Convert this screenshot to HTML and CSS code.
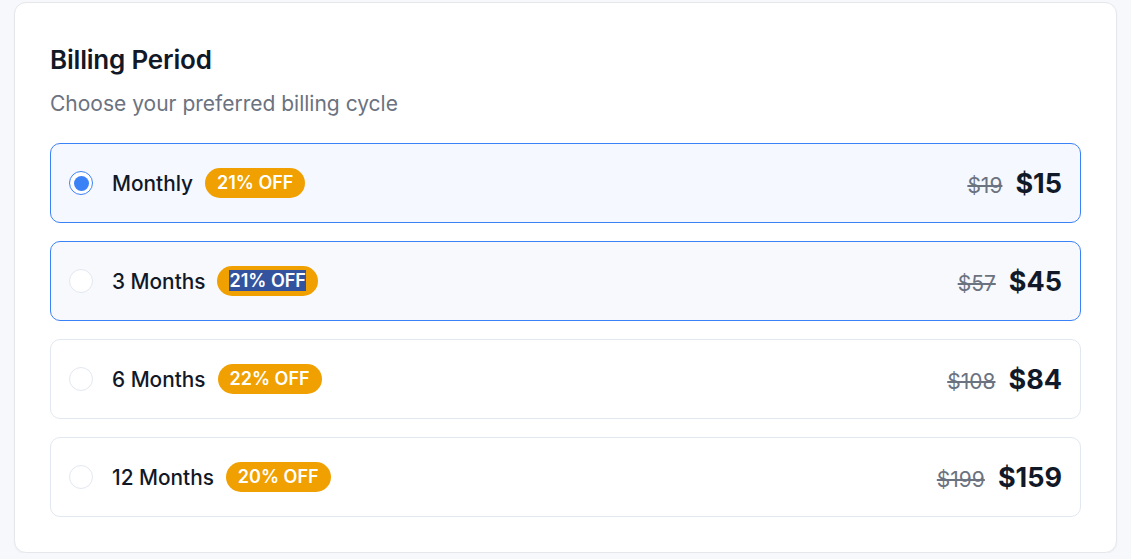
FILE: index.html
```html
<!DOCTYPE html>
<html lang="en">
<head>
<meta charset="utf-8">
<title>Billing Period</title>
<link rel="stylesheet" href="styles.css">
</head>
<body>
<div class="card">
  <h2 class="title">Billing Period</h2>
  <p class="subtitle">Choose your preferred billing cycle</p>
  <div class="options">
    <div class="option selected">
      <div class="left">
        <span class="radio checked"></span>
        <span class="label">Monthly</span>
        <span class="badge">21% OFF</span>
      </div>
      <div class="prices">
        <span class="old">$19</span>
        <span class="new">$15</span>
      </div>
    </div>
    <div class="option hover">
      <div class="left">
        <span class="radio"></span>
        <span class="label">3 Months</span>
        <span class="badge"><span class="sel">21% OFF</span></span>
      </div>
      <div class="prices">
        <span class="old">$57</span>
        <span class="new">$45</span>
      </div>
    </div>
    <div class="option">
      <div class="left">
        <span class="radio"></span>
        <span class="label">6 Months</span>
        <span class="badge">22% OFF</span>
      </div>
      <div class="prices">
        <span class="old">$108</span>
        <span class="new">$84</span>
      </div>
    </div>
    <div class="option">
      <div class="left">
        <span class="radio"></span>
        <span class="label">12 Months</span>
        <span class="badge">20% OFF</span>
      </div>
      <div class="prices">
        <span class="old">$199</span>
        <span class="new">$159</span>
      </div>
    </div>
  </div>
</div>
</body>
</html>
```
FILE: styles.css
```css
* { box-sizing: border-box; }
html, body { margin: 0; }
body {
  background: #f7f8fb;
  font-family: Inter, "Noto Sans", sans-serif;
  padding: 2px 14px 0;
  color: #111827;
}
.card {
  background: #fff;
  border: 1px solid #e5e7eb;
  border-radius: 12px;
  padding: 41px 35px 35px;
  box-shadow: 0 1px 2px rgba(16,24,40,0.04);
}
.title {
  margin: 0 0 14px;
  font-size: 26px;
  line-height: 32px;
  font-weight: 600;
  color: #111827;
  letter-spacing: -0.2px;
}
.subtitle {
  margin: 0 0 25px;
  font-size: 21px;
  line-height: 28px;
  color: #6b7280;
}
.options {
  display: flex;
  flex-direction: column;
  gap: 18px;
}
.option {
  height: 80px;
  border: 1px solid #e2e8f0;
  border-radius: 10px;
  background: #fff;
  display: flex;
  align-items: center;
  justify-content: space-between;
  padding: 0 18px;
}
.option.selected {
  border-color: #3b82f6;
  background: #f5f8ff;
}
.option.hover {
  border-color: #3b82f6;
  background: #f8f9fd;
}
.left {
  display: flex;
  align-items: center;
}
.radio {
  width: 24px;
  height: 24px;
  border-radius: 50%;
  border: 1px solid #e2e8f0;
  background: #fff;
  margin-right: 19px;
  flex: none;
  position: relative;
}
.radio.checked {
  border: 1.5px solid #3b82f6;
}
.radio.checked::after {
  content: "";
  position: absolute;
  left: 50%;
  top: 50%;
  width: 15px;
  height: 15px;
  margin: -7.5px 0 0 -7.5px;
  border-radius: 50%;
  background: #3b82f6;
}
.label {
  font-size: 20.8px;
  font-weight: 500;
  line-height: 28px;
  padding-top: 2px;
  color: #111827;
  margin-right: 12px;
}
.badge {
  display: inline-block;
  background: #f0a000;
  color: #fff;
  font-size: 18px;
  font-weight: 600;
  line-height: 24px;
  padding: 3px 12px;
  border-radius: 999px;
}
.sel {
  background: #33539e;
  color: #fff;
}
.prices {
  display: flex;
  align-items: baseline;
  gap: 13px;
}
.old {
  font-size: 21px;
  color: #6b7280;
  text-decoration: line-through;
}
.new {
  font-size: 27px;
  font-weight: 700;
  color: #111827;
}
```
